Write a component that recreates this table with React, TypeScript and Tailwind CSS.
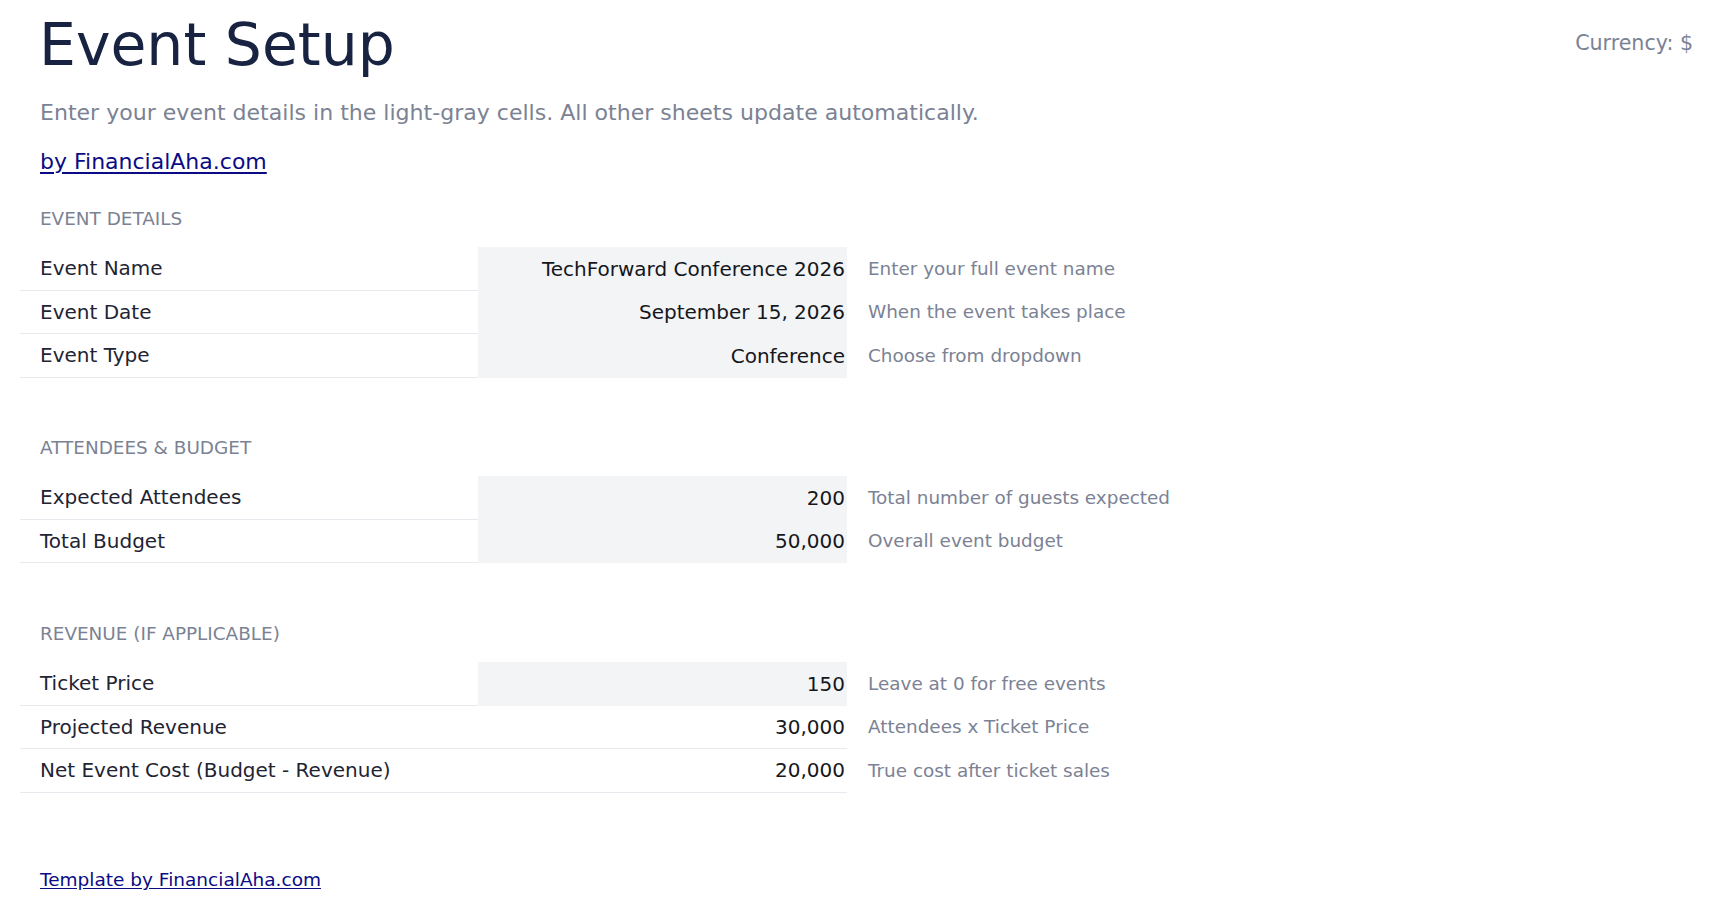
import React from "react";

type Row = {
  label: string;
  value: string;
  note: string;
  input?: boolean;
};

const sections: { title: string; rows: Row[]; gap: string }[] = [
  {
    title: "EVENT DETAILS",
    gap: "mt-[29px]",
    rows: [
      { label: "Event Name", value: "TechForward Conference 2026", note: "Enter your full event name", input: true },
      { label: "Event Date", value: "September 15, 2026", note: "When the event takes place", input: true },
      { label: "Event Type", value: "Conference", note: "Choose from dropdown", input: true },
    ],
  },
  {
    title: "ATTENDEES & BUDGET",
    gap: "mt-[58.5px]",
    rows: [
      { label: "Expected Attendees", value: "200", note: "Total number of guests expected", input: true },
      { label: "Total Budget", value: "50,000", note: "Overall event budget", input: true },
    ],
  },
  {
    title: "REVENUE (IF APPLICABLE)",
    gap: "mt-[59px]",
    rows: [
      { label: "Ticket Price", value: "150", note: "Leave at 0 for free events", input: true },
      { label: "Projected Revenue", value: "30,000", note: "Attendees x Ticket Price" },
      { label: "Net Event Cost (Budget - Revenue)", value: "20,000", note: "True cost after ticket sales" },
    ],
  },
];

function SetupRow({ row }: { row: Row }) {
  return (
    <div className="flex h-[43.5px]">
      <div className="flex w-[458px] items-center border-b border-[#e8e9ee] pl-[20px] text-[20px] text-[#1f2433]">
        {row.label}
      </div>
      <div
        className={
          row.input
            ? "flex w-[369px] items-center justify-end bg-[#f3f4f6] pr-[2px] text-[20px] text-[#15171c]"
            : "flex w-[369px] items-center justify-end border-b border-[#e8e9ee] pr-[2px] text-[20px] text-[#15171c]"
        }
      >
        {row.value}
      </div>
      <div className="flex items-center pl-[21px] text-[18.4px] text-[#7b8294]">{row.note}</div>
    </div>
  );
}

export default function App() {
  return (
    <div className="min-h-screen bg-white px-[20px] pt-[16px] font-['DejaVu_Sans',sans-serif]">
      <div className="flex items-start justify-between">
        <h1 className="pl-[19px] text-[58.4px] leading-[58px] text-[#172341]">Event Setup</h1>
        <div className="-mr-[2px] mt-[12px] text-[20.6px] leading-[30px] text-[#7b8294]">Currency: $</div>
      </div>
      <p className="mt-[22px] pl-[20px] text-[22.05px] leading-[33px] text-[#7b8294]">
        Enter your event details in the light-gray cells. All other sheets update automatically.
      </p>
      <div className="mt-[16px] pl-[20px] text-[22px] leading-[33px]">
        <a href="#" className="text-[#0b0b85] underline underline-offset-[3px]">
          by FinancialAha.com
        </a>
      </div>

      {sections.map((section) => (
        <section key={section.title} className={section.gap}>
          <div className="mb-[16px] pl-[20px] text-[18.4px] leading-[24px] text-[#7b8294]">{section.title}</div>
          {section.rows.map((row) => (
            <SetupRow key={row.label} row={row} />
          ))}
        </section>
      ))}

      <div className="mt-[75.5px] pb-[20px] pl-[20px] text-[18.5px] leading-[24px]">
        <a href="#" className="text-[#0b0b85] underline underline-offset-[2px]">
          Template by FinancialAha.com
        </a>
      </div>
    </div>
  );
}
